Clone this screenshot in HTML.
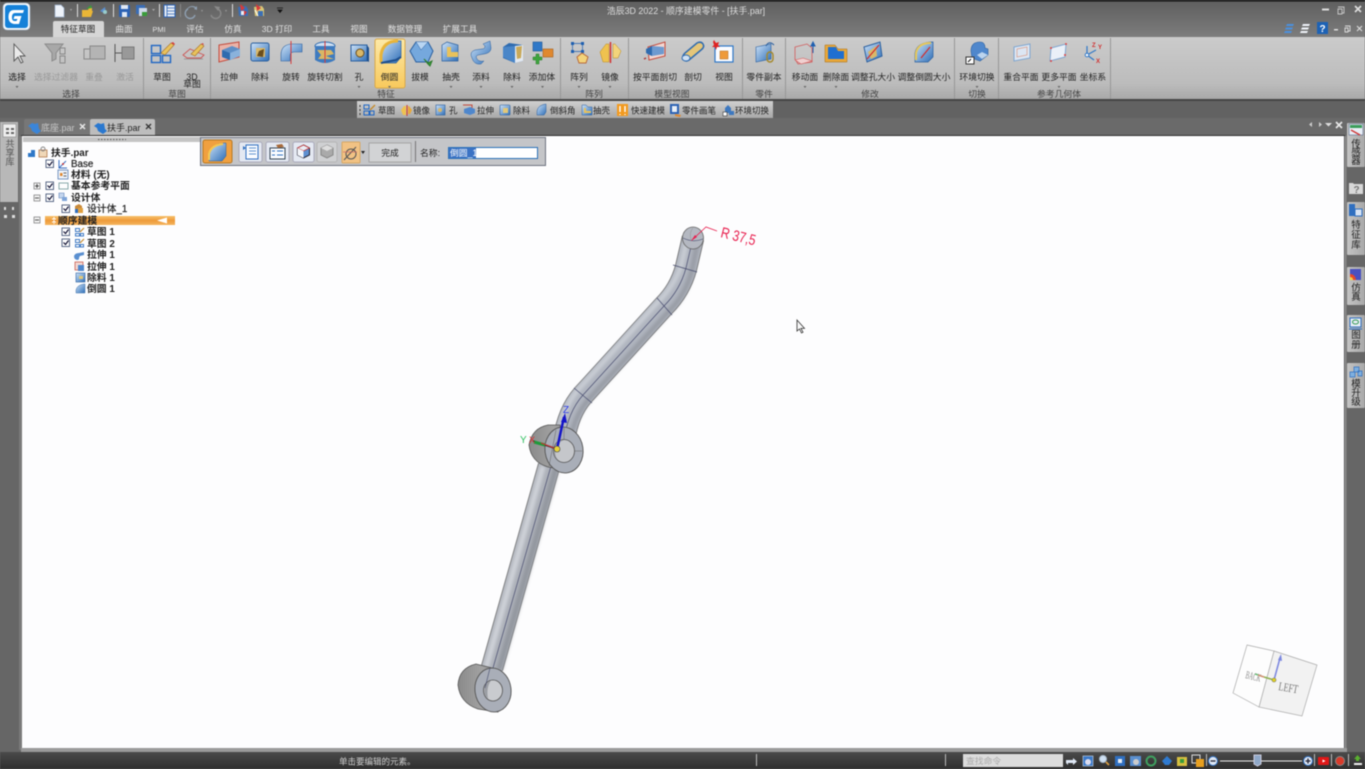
<!DOCTYPE html>
<html lang="zh"><head><meta charset="utf-8"><title>浩辰3D 2022</title>
<style>
html,body{margin:0;padding:0;width:1365px;height:769px;overflow:hidden;background:#666}
svg{display:block;filter:blur(.4px)}
text{font-family:"Liberation Sans","Noto Sans CJK SC",sans-serif;font-size:8.8px;fill:#222}
.c{text-anchor:middle}.g{fill:#999}.gr{fill:#444}.tree{font-size:9.8px;font-weight:bold;fill:#222}
.q{font-size:8.5px;fill:#222}.tab{fill:#e2e2e2;font-size:8.6px}
</style></head><body>
<svg width="1365" height="769" viewBox="0 0 1365 769" xmlns="http://www.w3.org/2000/svg">
<defs>
<linearGradient id="tb" x1="0" y1="0" x2="0" y2="1"><stop offset="0" stop-color="#5e5e5e"/><stop offset="1" stop-color="#7d7d7d"/></linearGradient>
<linearGradient id="rb" x1="0" y1="0" x2="0" y2="1"><stop offset="0" stop-color="#cbcbcb"/><stop offset=".75" stop-color="#bcbcbc"/><stop offset="1" stop-color="#a9a9a9"/></linearGradient>
<linearGradient id="qb" x1="0" y1="0" x2="0" y2="1"><stop offset="0" stop-color="#d0d0d0"/><stop offset="1" stop-color="#a8a8a8"/></linearGradient>
<linearGradient id="hl" x1="0" y1="0" x2="0" y2="1"><stop offset="0" stop-color="#fde9a8"/><stop offset="1" stop-color="#f8c95c"/></linearGradient>
<linearGradient id="or" x1="0" y1="0" x2="0" y2="1"><stop offset="0" stop-color="#f7c06a"/><stop offset=".5" stop-color="#ee9a3a"/><stop offset="1" stop-color="#f5b45e"/></linearGradient>
<linearGradient id="blu" x1="0" y1="0" x2="1" y2="1"><stop offset="0" stop-color="#cfe3f7"/><stop offset="1" stop-color="#2f6fb8"/></linearGradient>
<linearGradient id="side" x1="0" y1="0" x2="1" y2="0"><stop offset="0" stop-color="#c4c4c4"/><stop offset="1" stop-color="#a8a8a8"/></linearGradient>
<linearGradient id="st" x1="0" y1="0" x2="0" y2="1"><stop offset="0" stop-color="#4a4a4a"/><stop offset="1" stop-color="#2f2f2f"/></linearGradient>
<linearGradient id="hub" x1="0" y1="0" x2="1" y2="0"><stop offset="0" stop-color="#8a8a8a"/><stop offset=".6" stop-color="#a2a2a2"/><stop offset="1" stop-color="#8f8f8f"/></linearGradient>
<filter id="sb" filterUnits="userSpaceOnUse" x="440" y="200" width="300" height="520"><feGaussianBlur stdDeviation="1.8"/></filter>
</defs>

<!-- frame -->
<rect width="1365" height="769" fill="#666"/>
<rect width="1365" height="37" fill="url(#tb)"/>
<rect width="1365" height="1.5" fill="#111"/>
<rect y="37" width="1365" height="62" fill="url(#rb)"/>
<rect y="99" width="1365" height="2" fill="#454545"/>
<rect y="101" width="1365" height="17" fill="#626262"/>
<rect y="118" width="1365" height="18" fill="#6a6a6a"/>
<rect x="357" y="101" width="416" height="17" fill="url(#qb)"/>

<!-- logo -->
<rect x="3" y="3" width="27" height="27" rx="4" fill="#f4f8fc" stroke="#9ab" stroke-width=".6"/>
<rect x="5" y="5" width="23" height="23" rx="3" fill="#1581d8"/>
<path d="M24 10 H14 Q9 10 8.500 16 Q8 23 14 24 H19 L21.500 16 H14.500 L13.500 19 H17.500 L16.500 21 H14 Q11.500 20.500 12 16 Q12.500 13 15 13 H23 Z" fill="#fff"/>

<!-- qat -->
<path d="M55 5h6l3 3v9h-9z" fill="#eef3fa" stroke="#9fb4d0" stroke-width=".7"/>
<path d="M70 9l2 0-1 2z" fill="#aaa"/>
<rect x="77" y="4" width="1" height="13" fill="#ddd"/>
<path d="M82 10h6l1-2h3v3h1l-2 6h-9z" fill="#e9b637"/><path d="M86 9l5-4 1 3z" fill="#3a9c3a"/>
<path d="M100 11l5-4 1 7z" fill="#5b8fd0"/><circle cx="105" cy="12" r="2" fill="#9cc"/>
<rect x="113" y="4" width="1" height="13" fill="#ddd"/>
<rect x="119" y="5" width="11" height="12" rx="1" fill="#2c62b4"/><rect x="121" y="5" width="7" height="4" fill="#dfe8f5"/><rect x="122" y="12" width="5" height="5" fill="#dfe8f5"/>
<rect x="136" y="5" width="9" height="9" fill="#3a6db5"/><rect x="139" y="8" width="8" height="8" fill="#cfd9e8"/><rect x="142" y="12" width="5" height="4" fill="#3a9c3a"/>
<path d="M152 9l3 0-1.500 2z" fill="#aaa"/>
<rect x="159" y="4" width="1" height="13" fill="#ddd"/>
<rect x="164" y="5" width="11" height="12" fill="#e8eef6" stroke="#2c62b4"/><path d="M167 5v12M167 8h8M167 11h8M167 14h8" stroke="#2c62b4" stroke-width=".8"/>
<rect x="180" y="4" width="1" height="13" fill="#888"/>
<path d="M186 11q4-6 9-3l-1 1 3 1v-4l-1 1q-6-3-10 3" fill="#8fa0b2"/><path d="M188 9a5 5 0 1 0 7 6" fill="none" stroke="#8fa0b2" stroke-width="1.400"/>
<path d="M201 10l2 0-1 2z" fill="#999"/>
<path d="M218 9a5 5 0 1 1-7 6" fill="none" stroke="#8a8a8a" stroke-width="1.400"/><path d="M214 6l6 1-2 4z" fill="#8a8a8a"/>
<path d="M225 10l2 0-1 2z" fill="#999"/>
<rect x="232" y="4" width="1" height="13" fill="#ddd"/>
<path d="M238 7l8-1 2 3 0 7-9 0z" fill="#3b6fb5"/><path d="M240 4l5 4-4 3zM243 10l4 2-3 4z" fill="#d83a3a"/><path d="M241 11h3v4h-3z" fill="#e8eef6"/>
<path d="M254 7l8-1 2 3 0 7-9 0z" fill="#d8c676"/><path d="M256 4l5 4-4 3z" fill="#d83a3a"/><path d="M258 11l5 0 0 5-5 0z" fill="#3b6fb5"/><path d="M255 10l3 6" stroke="#fff"/>
<path d="M277 8h6M278 10h4l-2 2.500z" fill="#111" stroke="#111" stroke-width=".8"/>

<!-- title -->
<text x="686" y="14" class="c" style="font-size:8.9px;fill:#ddd">浩辰3D 2022 - 顺序建模零件 - [扶手.par]</text>

<!-- window controls -->
<rect x="1322" y="8.500" width="7" height="2" fill="#ddd"/>
<path d="M1338 7h6v6h-2M1338 9h4v5h-4z" fill="none" stroke="#c8c8c8" stroke-width=".9"/>
<path d="M1355 6l6 6M1361 6l-6 6" stroke="#ddd" stroke-width="1.700"/>
<path d="M1287 24h7l-1 2h-7zM1286 27.500h7l-1 2h-7zM1285 31h7l-1 2h-7z" fill="#4a90df"/>
<path d="M1303 24h7l-1 2h-7zM1302 27.500h7l-1 2h-7zM1301 31h7l-1 2h-7z" fill="#f0f4fa"/>
<rect x="1317" y="22" width="11" height="12" fill="#1d62b5"/><text x="1322.500" y="32" class="c" style="font-size:10px;font-weight:bold;fill:#fff">?</text>
<rect x="1334" y="29" width="4" height="1.500" fill="#ddd"/>
<path d="M1345 26h5v5h-2M1345 28h3v4h-3z" fill="none" stroke="#ddd" stroke-width=".9"/>
<path d="M1357 26l5 5M1362 26l-5 5" stroke="#ddd" stroke-width="1.100"/>

<!-- ribbon tabs -->
<path d="M53 37V23q0-2 2-2h47q2 0 2 2v14z" fill="#d6d6d6"/>
<text x="78" y="32" class="c" style="fill:#222;font-size:8.6px">特征草图</text>
<text x="124" y="32" class="c tab">曲面</text><text x="159" y="32" class="c tab" style="font-size:7.5px">PMI</text><text x="195" y="32" class="c tab">评估</text><text x="233" y="32" class="c tab">仿真</text><text x="277" y="32" class="c tab">3D 打印</text><text x="321" y="32" class="c tab">工具</text><text x="359" y="32" class="c tab">视图</text><text x="405" y="32" class="c tab">数据管理</text><text x="460" y="32" class="c tab">扩展工具</text>

<!-- separators -->
<path d="M143.500 38v61M210.500 38v61M560.500 38v61M628.500 38v61M742.500 38v61M785.500 38v61M954.500 38v61M998.500 38v61M1110.500 38v61" stroke="#979797"/>

<!-- highlight -->
<rect x="375" y="39" width="30" height="49" rx="2" fill="url(#hl)" stroke="#d9a94a"/>

<!-- ribbon icons -->
<path d="M14 44l0 17 4-4 3 6 2-1-3-6 5 0z" fill="#eaeaea" stroke="#555" stroke-width=".9"/>
<path d="M45 44h18l-7 9v6l-4 2v-8z" fill="#a8a8a8" stroke="#8a8a8a"/><rect x="60" y="48" width="5" height="6" fill="none" stroke="#888"/><rect x="60" y="56" width="5" height="7" fill="none" stroke="#888"/>
<rect x="84" y="49" width="9" height="10" fill="none" stroke="#888"/><rect x="90" y="46" width="15" height="13" fill="#b4b4b4" stroke="#888"/>
<path d="M115 44v18M115 53h7" stroke="#555" stroke-width="1"/><rect x="122" y="47" width="12" height="12" fill="#999" stroke="#777"/>
<rect x="151.500" y="45.500" width="9" height="8" fill="none" stroke="#1f66c4" stroke-width="1.400"/><rect x="151.500" y="55.500" width="9" height="7" fill="none" stroke="#1f66c4" stroke-width="1.400"/><rect x="162.500" y="55.500" width="8" height="7" fill="none" stroke="#1f66c4" stroke-width="1.400"/><path d="M161 53l10-10 3 2-9 10z" fill="#e9c25b" stroke="#a5702a" stroke-width=".6"/><path d="M171 43l2-1 2 2-1 1z" fill="#d64040"/>
<path d="M183 55l7-6 14 6-3 3-14 0z" fill="none" stroke="#c55" stroke-width=".9"/><path d="M191 54l10-10 3 2-9 10z" fill="#e9c25b" stroke="#a5702a" stroke-width=".6"/><path d="M201 44l2-1 1 2z" fill="#d64040"/><path d="M184 59h19" stroke="#999"/>
<!-- extrude -->
<path d="M219 45l20-3v15l-20 5z" fill="#e9b3a8" stroke="#c24a3c"/><path d="M222 50l10-4 8 3v7l-10 4-8-3z" fill="#5e8fc6"/><path d="M222 50l8 3v7l-8-3z" fill="#2f6baf"/><path d="M230 53l10-4v7l-10 4z" fill="#8ab2dc"/>
<!-- cutout -->
<rect x="251" y="43" width="18" height="18" rx="2" fill="url(#blu)" stroke="#2a5f9f"/><path d="M256 48h9v9l-9 0z" fill="#d9b869"/><path d="M257 56l2-5 5-2-1 8z" fill="#6b4e1d"/>
<!-- revolve -->
<path d="M281 61v-6q0-11 12-11l9 0v8h-8q-4 0-4 4v5z" fill="url(#blu)" stroke="#2a5f9f" stroke-width=".6"/><path d="M291 41v23" stroke="#d63b3b"/>
<!-- rev cut -->
<ellipse cx="325" cy="46" rx="10" ry="4" fill="#cfe0f3" stroke="#2f6baf"/><path d="M315 46v14q10 6 20 0v-14" fill="#3e7bc0"/><path d="M317 50l14 0 3 4-8 2 8 3-16 0 3-4z" fill="#d8b766"/><path d="M325 41v22" stroke="#d63b3b"/>
<!-- hole -->
<rect x="351" y="45" width="16" height="16" fill="url(#blu)" stroke="#2a5f9f"/><path d="M367 45l2 3v14l-2-1z" fill="#1e4f8e"/><circle cx="360" cy="53" r="4" fill="#d9b869" stroke="#6b4e1d"/>
<!-- round -->
<path d="M381 63V55q2-14 18-14h2v16l-5 6z" fill="url(#blu)" stroke="#2a5f9f" stroke-width=".7"/><path d="M381 63v-8q2-14 17-14" fill="none" stroke="#e8b43a" stroke-width="3"/><path d="M381 63l15-3 5-3" fill="none" stroke="#1e4f8e" stroke-width="2"/>
<!-- draft -->
<path d="M410 51l6-9h12l5 9-5 11h-12z" fill="#75a8dd" stroke="#2a5f9f"/><path d="M416 42l5 8 7-8" fill="#b8d5f2" stroke="#2a5f9f" stroke-width=".5"/><path d="M424 59l4 4 4-2-2 5-2-2z" fill="#3a9c3a" stroke="#2b7a2b"/>
<!-- shell -->
<path d="M442 45l5-3 11 3v16h-16z" fill="url(#blu)" stroke="#2a5f9f" stroke-width=".7"/><path d="M447 47h4v5h7v5h-11z" fill="#e9c25b"/>
<!-- add -->
<path d="M472 58q-3-6 3-8l7-1q3 0 3-3l-2-2 7-3 1 7q0 5-7 6l-6 1q-3 1-1 4 2 3 7 2l-3 3q-7 1-9-6z" fill="url(#blu)" stroke="#2a5f9f" stroke-width=".5"/>
<!-- remove -->
<path d="M503 47l6-4 14 2v16l-8 2-12-5z" fill="#2f6baf"/><path d="M515 46l8-1v16l-8 2z" fill="#e3e9f1"/><path d="M516 47l6-1-1 12-4 1z" fill="#c9a959"/><path d="M503 47l12-1v17l-12-6z" fill="#4a86c8"/>
<!-- add body -->
<rect x="533" y="42" width="9" height="9" fill="#2f78c8" stroke="#1e5595" stroke-width=".6"/><rect x="543" y="49" width="10" height="8" fill="#e0882f" stroke="#a65f1c" stroke-width=".6"/><path d="M536 54h3v3h3v3h-3v4h-3v-4h-3v-3h3z" fill="#3da53d" stroke="#2b7a2b" stroke-width=".5"/>
<!-- pattern -->
<rect x="571" y="42" width="3" height="3" fill="#1e5fb0"/><rect x="581" y="42" width="3" height="3" fill="#1e5fb0"/><rect x="571" y="50" width="3" height="3" fill="#1e5fb0"/><rect x="581" y="50" width="3" height="3" fill="#1e5fb0"/><path d="M572.500 43.500h10v8h-10z" fill="none" stroke="#1e5fb0" stroke-width=".7"/>
<path d="M582 53l6 4-2 6h-7l-2-6z" fill="#f3d47b" stroke="#b96a3a"/>
<!-- mirror -->
<path d="M600 52l6-8 3 0v18h-6z" fill="#efc24f" stroke="#b98a24" stroke-width=".5"/><path d="M613 44h2l6 7-3 7h-5z" fill="#f3d47b" stroke="#b98a24" stroke-width=".5"/><path d="M610.500 42v21" stroke="#d42b2b" stroke-width="1.400"/>
<!-- plane cut -->
<path d="M648 47l17-5v14l-16 4z" fill="#f2d7d2" stroke="#c24a3c"/><path d="M647 49l5-3 12 1v7l-12 2-5-2z" fill="#6d9ad0"/><path d="M646 49l6-3v10l-6-3z" fill="#2f6baf"/><path d="M646 58l-2 1" stroke="#a33" stroke-width="1.500"/>
<!-- section -->
<path d="M684 60q-3-3 1-7l12-10q4-2 6 1 2 3-2 6l-12 10q-3 2-5 0z" fill="#e5c679" stroke="#2f6baf" stroke-width="1.500"/><ellipse cx="686" cy="58" rx="4" ry="3" fill="#cfe0f3" stroke="#2f6baf"/>
<!-- view -->
<rect x="715" y="46" width="18" height="16" fill="#fbfcff" stroke="#2f78c8" stroke-width="1.200"/><rect x="720" y="51" width="8" height="8" fill="#ee9a3a" stroke="#b46a1d" stroke-width=".5"/><path d="M714 40l2 3 3-1-1 3 2 2-3 0-1 3-1-3-3 0 2-2-1-3z" fill="#e02222"/>
<!-- copy -->
<path d="M756 47l15-3v15l-15 3z" fill="url(#blu)" stroke="#2a5f9f" stroke-width=".6"/><path d="M766 46q3-6 8-1" fill="none" stroke="#2a5f9f"/><rect x="767" y="52" width="6" height="10" rx="3" fill="none" stroke="#a5882a" stroke-width="1.400"/>
<!-- move face -->
<path d="M795 47l12-3 5 4v14l-14 2-3-5z" fill="none" stroke="#d25a5a" stroke-width=".8"/><path d="M795 60l8-2 9 3-11 3z" fill="#f0d0d0" stroke="#d25a5a" stroke-width=".6"/><path d="M813 53v-10M811 46l2-4 2 4z" stroke="#1f5fb0" fill="#1f5fb0" stroke-width="1"/>
<!-- delete face -->
<path d="M825 45h10l3 4h9v13h-22z" fill="#e9a838" stroke="#a66b14" stroke-width=".5"/><path d="M828 47h8l2 4h6v8h-16z" fill="#1f6fd0"/>
<!-- resize hole -->
<path d="M864 47l16-5 2 14-15 6z" fill="url(#blu)" stroke="#2a5f9f"/><path d="M868 52l8-6 1 10-6 3z" fill="#d9b869"/><path d="M867 59l12-14" stroke="#d42b2b" stroke-width="1.200"/>
<!-- resize round -->
<path d="M915 62V53q2-11 18-11v15l-5 5z" fill="url(#blu)" stroke="#2a5f9f" stroke-width=".7"/><path d="M916 60v-7q2-10 15-10" fill="none" stroke="#e8c85a" stroke-width="2"/><path d="M921 58l9-11" stroke="#d42b2b" stroke-width="1.200"/>
<!-- env switch -->
<path d="M971 51q0-9 9-9 5 0 5 6l3 1 0 6-8 6-8-3z" fill="#4f87cc" stroke="#2a5f9f" stroke-width=".6"/><path d="M977 55l5-3 6 3-6 4z" fill="#bcd4ee"/><rect x="966" y="57" width="8" height="7" fill="#fff" stroke="#333"/><path d="M968 62l3-3" stroke="#111"/>
<!-- planes -->
<path d="M1014 47l16-3v14l-16 3z" fill="#dce6f3" stroke="#7fa5cf"/><path d="M1017 49l10-2v8l-10 2z" fill="none" stroke="#d99a85" stroke-width=".7"/>
<path d="M1051 48l15-4-1 13-15 4z" fill="#eaf0f8" stroke="#7fa5cf"/><circle cx="1051" cy="48" r="1" fill="#d44"/><circle cx="1066" cy="44" r="1" fill="#d44"/><circle cx="1065" cy="55" r="1" fill="#d44"/><circle cx="1051" cy="61" r="1" fill="#d44"/>
<path d="M1087 55v-9M1087 55l9-5M1087 55l7 5" stroke="#2f78c8" stroke-width="1.200" fill="none"/><circle cx="1087" cy="55" r="1.800" fill="#fff" stroke="#2f78c8"/>
<text x="1092" y="47" style="font-size:6px;fill:#d03030;font-weight:bold">Z</text><text x="1098" y="49" style="font-size:6px;fill:#d03030;font-weight:bold">Y</text><text x="1096" y="63" style="font-size:6px;fill:#d03030;font-weight:bold">X</text>

<!-- ribbon labels -->
<text x="17" y="80" class="c">选择</text><text x="56" y="80" class="c g">选择过滤器</text><text x="94" y="80" class="c g">重叠</text><text x="125" y="80" class="c g">激活</text>
<text x="162" y="80" class="c">草图</text><text x="192" y="80" class="c">3D</text><text x="192" y="87" class="c">草图</text>
<text x="229" y="80" class="c">拉伸</text><text x="260" y="80" class="c">除料</text><text x="291" y="80" class="c">旋转</text><text x="325" y="80" class="c">旋转切割</text><text x="359" y="80" class="c">孔</text><text x="389.500" y="80" class="c">倒圆</text><text x="420" y="80" class="c">拔模</text><text x="451" y="80" class="c">抽壳</text><text x="481" y="80" class="c">添料</text><text x="512" y="80" class="c">除料</text><text x="542" y="80" class="c">添加体</text>
<text x="579" y="80" class="c">阵列</text><text x="610" y="80" class="c">镜像</text><text x="655" y="80" class="c">按平面剖切</text><text x="693" y="80" class="c">剖切</text><text x="724" y="80" class="c">视图</text><text x="764" y="80" class="c">零件副本</text>
<text x="805" y="80" class="c">移动面</text><text x="836" y="80" class="c">删除面</text><text x="873" y="80" class="c">调整孔大小</text><text x="924" y="80" class="c">调整倒圆大小</text><text x="977" y="80" class="c">环境切换</text><text x="1021" y="80" class="c">重合平面</text><text x="1059" y="80" class="c">更多平面</text><text x="1093" y="80" class="c">坐标系</text>
<text x="71" y="97" class="c gr">选择</text><text x="177" y="97" class="c gr">草图</text><text x="386" y="97" class="c gr">特征</text><text x="594" y="97" class="c gr">阵列</text><text x="672" y="97" class="c gr">模型视图</text><text x="764" y="97" class="c gr">零件</text><text x="870" y="97" class="c gr">修改</text><text x="977" y="97" class="c gr">切换</text><text x="1059" y="97" class="c gr">参考几何体</text>
<path d="M15.500 86l3 0-1.500 2zM357.500 86l3 0-1.500 2zM388 86l3 0-1.500 2zM449.500 86l3 0-1.500 2zM479.500 86l3 0-1.500 2zM510.500 86l3 0-1.500 2zM541 86l3 0-1.500 2zM577.500 86l3 0-1.500 2zM608.500 86l3 0-1.500 2zM803.500 86l3 0-1.500 2zM834.500 86l3 0-1.500 2zM975.500 86l3 0-1.500 2zM1057.500 86l3 0-1.500 2z" fill="#666"/>

<!-- quick toolbar -->
<path d="M360 105v2M360 109v2M360 113v2" stroke="#333"/>
<rect x="364" y="105" width="5" height="4" fill="none" stroke="#1f66c4"/><rect x="364" y="111" width="5" height="4" fill="none" stroke="#1f66c4"/><rect x="370" y="111" width="4" height="4" fill="none" stroke="#1f66c4"/><path d="M370 110l5-5" stroke="#c58a2a" stroke-width="1.300"/>
<path d="M401 110l3-4h2v9h-3z" fill="#efc24f"/><path d="M408 106h1l3 4-2 4h-2z" fill="#e9a838"/><path d="M407 105v11" stroke="#c33"/>
<rect x="436" y="105" width="9" height="10" fill="url(#blu)" stroke="#2a5f9f" stroke-width=".6"/><circle cx="440" cy="110" r="2" fill="#d9b869"/>
<path d="M463 105h9v8" fill="none" stroke="#c24a3c"/><path d="M464 109l6-2 5 2v4l-5 2-6-2z" fill="#4f87cc"/>
<rect x="500" y="105" width="10" height="10" rx="1" fill="url(#blu)" stroke="#2a5f9f" stroke-width=".6"/><path d="M503 108h5v5h-5z" fill="#e3c878"/>
<path d="M537 115v-4q1-6 9-7v8l-2 3z" fill="url(#blu)" stroke="#2a5f9f" stroke-width=".5"/>
<path d="M582 105h4l2 2h4v8h-10z" fill="url(#blu)" stroke="#2a5f9f" stroke-width=".5"/><path d="M584 108h2v3h5v2h-7z" fill="#e9c25b"/>
<rect x="617" y="104" width="11" height="12" fill="#f29a1f"/><path d="M620 106v6M625 106v6M620 114v1M625 114v1" stroke="#fff" stroke-width="1.400"/>
<rect x="670" y="104" width="9" height="10" fill="#2c62b4"/><rect x="672" y="106" width="5" height="6" fill="#e8eef6"/><path d="M675 114l6 1-1 2-5-1z" fill="#e0882f"/>
<path d="M725 108l3-3 3 3v3l3 0v4h-5v-2h-4z" fill="#3d78bf"/><rect x="723" y="112" width="4" height="4" fill="#fff" stroke="#333" stroke-width=".6"/>
<text x="378" y="113.500" class="q">草图</text><text x="413" y="113.500" class="q">镜像</text><text x="449" y="113.500" class="q">孔</text><text x="477" y="113.500" class="q">拉伸</text><text x="513" y="113.500" class="q">除料</text><text x="550" y="113.500" class="q">倒斜角</text><text x="593" y="113.500" class="q">抽壳</text><text x="631" y="113.500" class="q">快速建模</text><text x="682" y="113.500" class="q">零件画笔</text><text x="735" y="113.500" class="q">环境切换</text>

<!-- doc tabs -->
<path d="M24 136v-15q0-2 2-2h64v17z" fill="#777"/>
<path d="M90 136v-15q0-2 2-2h61q2 0 2 2v15z" fill="#bdbdbd"/>
<path d="M28 126l4-3 3 1 3-1 1 6 2 2-4 3-5-3-1-3z" fill="#3b85d8"/>
<path d="M94 126l4-3 3 1 3-1 1 6 2 2-4 3-5-3-1-3z" fill="#2a78cf"/>
<text x="41" y="131" style="font-size:9px;fill:#c8c8c8">底座.par</text>
<text x="107" y="131" style="font-size:9px;fill:#222">扶手.par</text>
<path d="M80 124l5 5M85 124l-5 5" stroke="#e8e8e8" stroke-width="1.500"/><path d="M146 124l5 5M151 124l-5 5" stroke="#333" stroke-width="1.300"/>
<path d="M1312 122v5l-3-2.500zM1319 122v5l3-2.500z" fill="#ccc"/><path d="M1325 123h7l-3.500 3.500z" fill="#ddd"/><path d="M1336 122l6 6M1342 122l-6 6" stroke="#e8e8e8" stroke-width="1.700"/>

<!-- viewport -->
<rect x="21" y="135" width="1324" height="615" fill="#333"/>
<rect x="22" y="136" width="1322" height="612" fill="#fdfdfe"/>
<rect x="1344.500" y="136" width="2" height="614" fill="#8a8a8a"/>
<rect x="19" y="136" width="3" height="614" fill="#7a7a7a"/>
<rect x="21" y="748" width="1326" height="4" fill="#9a9a9a"/>

<!-- left strip -->
<path d="M0 122h18v80H0z" fill="#b8b8b8"/>
<rect x="3" y="124" width="13" height="13" fill="#efefef" stroke="#888" stroke-width=".6"/>
<path d="M6 128h3v2H6zM11 128h3v2h-3zM6 132h3v2H6zM11 132h3v2h-3z" fill="#666"/>
<text x="10" y="147" class="c" style="font-size:9px;fill:#555">共</text><text x="10" y="156" class="c" style="font-size:9px;fill:#555">享</text><text x="10" y="165" class="c" style="font-size:9px;fill:#555">库</text>
<rect x="4" y="207" width="2" height="3" fill="#ddd"/><rect x="12" y="207" width="2" height="3" fill="#ddd"/><rect x="4" y="215" width="3" height="3" fill="#ddd"/><rect x="12" y="215" width="3" height="3" fill="#ddd"/>

<!-- right side tabs -->
<rect x="1347" y="123" width="18" height="44" rx="1" fill="url(#side)"/>
<rect x="1349" y="124" width="14" height="11" fill="#e8eef6" stroke="#5a6a8a" stroke-width=".6"/><path d="M1350 125h12v3h-12z" fill="#3a9c5a"/><path d="M1351 130l9 5" stroke="#d03a3a" stroke-width="1.500"/>
<text x="1356" y="147" class="c" style="font-size:9.500px;fill:#222">传</text><text x="1356" y="155.500" class="c" style="font-size:9.500px;fill:#222">感</text><text x="1356" y="164" class="c" style="font-size:9.500px;fill:#222">器</text>
<path d="M1349 183h4l1 1h9v10h-14z" fill="#d8d8d8"/><text x="1356.500" y="193" class="c" style="font-size:10px;font-weight:bold;fill:#777">?</text>
<rect x="1347" y="202" width="18" height="53" rx="1" fill="url(#side)"/>
<rect x="1349" y="204" width="6" height="12" fill="#2f6fc0"/><rect x="1355" y="209" width="7" height="7" fill="#d8e4f4" stroke="#2f6fc0"/>
<text x="1356" y="228" class="c" style="font-size:9.500px;fill:#222">特</text><text x="1356" y="238" class="c" style="font-size:9.500px;fill:#222">征</text><text x="1356" y="248" class="c" style="font-size:9.500px;fill:#222">库</text>
<rect x="1347" y="267" width="18" height="38" rx="1" fill="url(#side)"/>
<rect x="1350" y="269" width="11" height="11" fill="#4a50c0"/><path d="M1350 280v-6q5 0 6 6z" fill="#e8482a"/><path d="M1350 280v-3q3 0 3 3z" fill="#f5d040"/>
<text x="1356" y="291" class="c" style="font-size:9.500px;fill:#222">仿</text><text x="1356" y="300" class="c" style="font-size:9.500px;fill:#222">真</text>
<rect x="1347" y="315" width="18" height="37" rx="1" fill="url(#side)"/>
<rect x="1350" y="318" width="11" height="9" fill="#e8eef6" stroke="#2f6fc0"/><ellipse cx="1355.500" cy="322" rx="3" ry="2" fill="none" stroke="#3a9c5a"/><path d="M1349 329h13" stroke="#2f6fc0"/>
<text x="1356" y="338" class="c" style="font-size:9.500px;fill:#222">图</text><text x="1356" y="348" class="c" style="font-size:9.500px;fill:#222">册</text>
<rect x="1347" y="363" width="18" height="45" rx="1" fill="url(#side)"/>
<path d="M1350 372h5v5h-5zM1354 367h5v5h-5zM1358 371h4v5h-4z" fill="#7fb0e0" stroke="#2f6fc0" stroke-width=".7"/>
<text x="1356" y="387" class="c" style="font-size:9.500px;fill:#222">模</text><text x="1356" y="396" class="c" style="font-size:9.500px;fill:#222">升</text><text x="1356" y="405" class="c" style="font-size:9.500px;fill:#222">级</text>

<!-- tree top -->
<rect x="23" y="137" width="177" height="5" fill="#c4c4c4"/>
<path d="M98 139.500h28" stroke="#555" stroke-dasharray="1.500 1.500"/>

<!-- tree -->
<rect x="28" y="150" width="7" height="7" fill="#2f78c8"/><rect x="28" y="150" width="3" height="3" fill="#fff"/>
<rect x="39" y="150" width="8" height="7" fill="#f0d8b8" stroke="#a86a3a" stroke-width=".7"/><circle cx="43" cy="149" r="2" fill="none" stroke="#888"/>
<text x="51" y="156" class="tree">扶手.par</text>
<g fill="#fff" stroke="#4a5a7a" stroke-width=".9">
<rect x="46" y="160" width="7.500" height="7.500"/><rect x="46" y="182" width="7.500" height="7.500"/><rect x="46" y="194" width="7.500" height="7.500"/><rect x="62" y="205" width="7.500" height="7.500"/><rect x="62" y="228" width="7.500" height="7.500"/><rect x="62" y="239" width="7.500" height="7.500"/>
</g>
<path d="M47.500 163.500l2 2 3-4M47.500 185.500l2 2 3-4M47.500 197.500l2 2 3-4M63.500 208.500l2 2 3-4M63.500 231.500l2 2 3-4M63.500 242.500l2 2 3-4" fill="none" stroke="#113" stroke-width="1.200"/>
<g fill="#f2f2f2" stroke="#777" stroke-width=".7">
<rect x="34" y="183" width="6" height="6"/><rect x="34" y="195" width="6" height="6"/><rect x="34" y="217" width="6" height="6"/>
</g>
<path d="M35 186h4M37 184v4M35 198h4M35 220h4" stroke="#222" stroke-width=".8"/>
<path d="M59 160v8h8M59 168l7-7" fill="none" stroke="#3a6fc0"/><circle cx="63" cy="164" r="1" fill="#c33"/>
<text x="71" y="167" class="tree" style="font-weight:normal;stroke:#222;stroke-width:.2">Base</text>
<rect x="58" y="170" width="10" height="9" fill="#eef3fa" stroke="#5a7fb5" stroke-width=".8"/><rect x="60" y="173" width="2.500" height="3" fill="#e0882f"/><path d="M63.500 173h3M63.500 176h3" stroke="#333" stroke-width=".7"/>
<text x="71" y="178" class="tree">材料 (无)</text>
<rect x="59" y="183" width="9" height="6" fill="none" stroke="#8aa"/><text x="71" y="189" class="tree">基本参考平面</text>
<path d="M59 193h5v5h-5z" fill="#c4d6ee" stroke="#5a7fb5" stroke-width=".6"/><path d="M62 197h5v4h-5z" fill="#7fa5d8"/><text x="71" y="201" class="tree">设计体</text>
<path d="M75 206l4-2 3 2v7h-7z" fill="#c98a3a"/><path d="M78 208h5v5h-5z" fill="#e0a040"/><path d="M75 209h3v4h-3z" fill="#2f6fc0"/><text x="87" y="212" class="tree" style="font-weight:normal;stroke:#222;stroke-width:.2">设计体_1</text>
<rect x="45" y="216" width="130" height="9" fill="url(#or)"/><path d="M54 217v7" stroke="#fff" stroke-dasharray="2 1"/><path d="M52 219h4M52 222h4" stroke="#fff"/>
<path d="M157 220.500l10-3v6z" fill="#fff"/>
<text x="58" y="224" class="tree">顺序建模</text>
<g fill="none" stroke="#2f6fc0" stroke-width=".9"><rect x="75.500" y="228.500" width="4" height="3"/><rect x="75.500" y="233.500" width="4" height="2.500"/><rect x="80.500" y="233.500" width="3" height="2.500"/><rect x="75.500" y="239.500" width="4" height="3"/><rect x="75.500" y="244.500" width="4" height="2.500"/><rect x="80.500" y="244.500" width="3" height="2.500"/></g>
<path d="M80 232l4-4M80 243l4-4" stroke="#c58a2a" stroke-width="1.200"/>
<text x="87" y="235" class="tree">草图 1</text><text x="87" y="247" class="tree">草图 2</text>
<path d="M74 256q1-3 5-3l5-1v3l-4 1q-1 1-1 3l-1 1q-4 0-4-4z" fill="#5a8fd0"/>
<rect x="75" y="262" width="8" height="8" fill="#f2d7d2" stroke="#c24a3c" stroke-width=".7"/><rect x="78" y="265" width="6" height="6" fill="#4f87cc"/>
<rect x="76" y="273" width="9" height="9" fill="url(#blu)" stroke="#2a5f9f" stroke-width=".6"/><rect x="79" y="276" width="4" height="3" fill="#e3c878"/>
<path d="M76 293v-3q1-5 8-6l1 0v9z" fill="url(#blu)" stroke="#2a5f9f" stroke-width=".4"/>
<text x="87" y="258" class="tree">拉伸 1</text><text x="87" y="270" class="tree">拉伸 1</text><text x="87" y="281" class="tree">除料 1</text><text x="87" y="292" class="tree">倒圆 1</text>

<!-- command bar -->
<rect x="200.500" y="137.500" width="345" height="28" fill="#c4c5c8" stroke="#6e7480"/>
<rect x="203" y="140" width="29" height="23" rx="2" fill="#f0a040" stroke="#b97820"/>
<path d="M209 161v-7q2-10 15-11h2v13l-4 5z" fill="url(#blu)" stroke="#2a5f9f" stroke-width=".5"/><path d="M209 160v-6q2-9 14-10" fill="none" stroke="#f5c850" stroke-width="2"/>
<rect x="239" y="142" width="23" height="20" rx="2" fill="#e4e9f2" stroke="#aab"/><rect x="246" y="145" width="12" height="14" fill="#fafcff" stroke="#2f6fc0"/><path d="M249 148h7M249 151h7M249 154h7" stroke="#2f6fc0" stroke-width=".8"/><path d="M243 146l3 2-3 2z" fill="#2f6fc0"/>
<rect x="266" y="142" width="23" height="20" rx="2" fill="#e4e9f2" stroke="#aab"/><rect x="270" y="148" width="15" height="11" fill="#fafcff" stroke="#345"/><path d="M272 151h3M272 155h3M277 151h6M277 155h6" stroke="#2f6fc0"/><path d="M276 145l6-1 2 3-6 1z" fill="#a86a3a"/>
<rect x="293" y="142" width="21" height="20" rx="2" fill="#e4e9f2" stroke="#aab"/><path d="M303.500 145l6 3v7l-6 3-6-3v-7z" fill="#5e8fd0" stroke="#223"/><path d="M297.500 148l6 3 6-3-6-3z" fill="#e8eef6" stroke="#c33" stroke-width=".7"/><path d="M297.500 148l6 3v7l-6-3z" fill="#f4f6fa"/>
<rect x="317" y="142" width="20" height="20" rx="2" fill="#cfd0d2" stroke="#b5b5b5"/><path d="M327 145l6 3v7l-6 3-6-3v-7z" fill="#aaa" stroke="#888"/><path d="M321 148l6 3 6-3-6-3z" fill="#ddd"/>
<rect x="342" y="142" width="18" height="21" rx="1" fill="#f1c284" stroke="#d6a766"/><circle cx="351" cy="154" r="5" fill="none" stroke="#555"/><path d="M344 160l12-13" stroke="#555"/><path d="M343 152l14 0" stroke="#c66" stroke-width=".7"/><path d="M361 151h4l-2 3z" fill="#222"/>
<rect x="369" y="143" width="42" height="19" fill="#d2d3d5" stroke="#a5a5a5"/><text x="390" y="156" class="c">完成</text>
<path d="M415.500 141v21" stroke="#777"/>
<text x="420" y="156">名称:</text>
<rect x="448.500" y="147.500" width="89" height="11" fill="#fff" stroke="#2a70b8"/>
<rect x="449" y="148" width="27" height="10" fill="#3a72c4"/>
<text x="450" y="156" style="font-size:8.8px;fill:#fff">倒圆_1</text>

<!-- ==== MODEL ==== -->
<g fill="none" stroke-linejoin="round">
<!-- lower arm -->
<path d="M549 466L492 668" stroke="#666" stroke-width="22.500"/>
<path d="M549 466L492 668" stroke="#adb1b9" stroke-width="21"/>
<path d="M543 466L486 668" stroke="#d2d5db" stroke-width="5" filter="url(#sb)"/>
<path d="M556 468L499 670" stroke="#92969e" stroke-width="6" filter="url(#sb)"/>
<path d="M551 466L493 668" stroke="#4a4e70" stroke-width=".7"/>
<!-- upper arm -->
<path d="M564 440Q568 412 583 395L664 306Q680 290 686 268L693 238" stroke="#666" stroke-width="22.500"/>
<path d="M564 440Q568 412 583 395L664 306Q680 290 686 268L693 238" stroke="#b0b5bf" stroke-width="21"/>
<path d="M558 438Q562 410 577 391L658 302Q674 286 681 266L688 236" stroke="#cdd1d8" stroke-width="4" filter="url(#sb)"/>
<path d="M570 442Q574 416 589 399L670 310Q686 294 692 270L698 240" stroke="#979ba4" stroke-width="5" filter="url(#sb)"/>
<path d="M564 440Q568 412 583 395L664 306Q680 290 686 268L693 238" stroke="#4a4e70" stroke-width=".7"/>
<path d="M574 388L592 403M657 298L672 315M673 265L697 272" stroke="#4a4e70" stroke-width=".7"/>
</g>
<!-- tip -->
<ellipse cx="693" cy="238" rx="10.500" ry="11" fill="#b4b8c1" stroke="#666" stroke-width=".8"/>
<path d="M683 238q10 5 20 1" fill="none" stroke="#4a4e70" stroke-width=".6"/>
<path d="M693 228q-4 4-2 12" fill="none" stroke="#888" stroke-width=".4"/>
<!-- R -->
<path d="M692 240L706 227L717 231" fill="none" stroke="#e8204f" stroke-width=".8"/>
<path d="M691 241l4-6 2 2z" fill="#e8204f"/>
<text transform="translate(720 237) rotate(14) scale(.8 1)" style="font-size:15px;fill:#e8204f">R 37,5</text>

<!-- center hub -->
<path d="M548 425Q532 428 529 445Q531 462 548 467L570 471L560 425z" fill="url(#hub)" stroke="#555" stroke-width=".8"/>
<ellipse cx="564" cy="450" rx="19" ry="23" transform="rotate(-8 564 450)" fill="#a9aeb8" stroke="#555" stroke-width=".9"/>
<ellipse cx="564" cy="451" rx="10.500" ry="11.500" fill="#c5c7cb" stroke="#555" stroke-width=".8"/>
<path d="M564 440a10 11 0 0 0 -6 20l-2-3q-3-10 4-15z" fill="#9a9da3"/>
<path d="M549 466L556 430M574 451l8 0M564 428l0 12" stroke="#666" stroke-width=".5"/>
<!-- axes -->
<path d="M557 449L564 417" stroke="#1414c8" stroke-width="2.500"/><path d="M561 422l4-9 2 10z" fill="#1414c8"/>
<path d="M557 449L533 441" stroke="#2a2a2a" stroke-width="1.500"/><path d="M545 445L534 442" stroke="#1f9a3a" stroke-width="3"/><path d="M557 449L541 443" stroke="#d03030" stroke-width="1"/>
<circle cx="557" cy="449" r="3" fill="#e7d23a" stroke="#444" stroke-width=".6"/>
<text x="563" y="413" style="font-size:10px;fill:#2a3ae8">Z</text>
<text x="520" y="443" style="font-size:10px;fill:#30c060">Y</text>
<text x="529" y="443" style="font-size:9px;fill:#e03030">X</text>

<!-- lower hub -->
<path d="M476 664Q459 668 458 685Q460 703 478 709L498 712L492 668z" fill="url(#hub)" stroke="#555" stroke-width=".8"/>
<ellipse cx="493" cy="690" rx="18" ry="22" transform="rotate(-8 493 690)" fill="#a9aeb8" stroke="#555" stroke-width=".9"/>
<ellipse cx="493" cy="690.500" rx="9.500" ry="10.500" fill="#c9cbcf" stroke="#555" stroke-width=".8"/>
<path d="M491 680.500a9 11 0 0 0 -6 15l3 3q-2-11 3-18z" fill="#9a9da3"/>
<path d="M490 668L485 688" stroke="#4a4e70" stroke-width=".6"/>

<!-- cursor -->
<path d="M797 320v11l2.500-2 2 4 1.500-.8-2-3.800h3.500z" fill="#f8f8f8" stroke="#333" stroke-width=".8"/>

<!-- view cube -->
<path d="M1274 651L1317 665L1302 716L1259 707z" fill="#f2f2f2" stroke="#aaa" stroke-width=".7"/>
<path d="M1247 645L1274 651L1259 707L1233 693z" fill="#fdfdfd" stroke="#aaa" stroke-width=".7"/>
<text transform="translate(1245 678) rotate(14) scale(.55 1.100)" style="font-size:10px;fill:#888;font-family:'Liberation Serif',serif">BACK</text>
<text transform="translate(1278 690) rotate(10) scale(.75 1.100)" style="font-size:11px;fill:#777;font-family:'Liberation Serif',serif">LEFT</text>
<path d="M1274 680L1280 658" stroke="#7a86e0" stroke-width="1.500"/><path d="M1278 660l3-6 1 7z" fill="#7a86e0"/>
<path d="M1274 680L1264 677" stroke="#8fb050" stroke-width="1.500"/><path d="M1264 677L1258 675" stroke="#d09070" stroke-width="1.500"/><path d="M1258 675l-3-1" stroke="#60c070" stroke-width="1.200"/>
<circle cx="1274" cy="680" r="2" fill="#e0d020" stroke="#776" stroke-width=".6"/>

<!-- status bar -->
<rect y="752" width="1365" height="17" fill="url(#st)"/>
<text x="339" y="764.500" style="font-size:8.5px;fill:#cfcfcf">单击要编辑的元素。</text>
<path d="M756.500 754v12M945.500 754v12" stroke="#bbb"/>
<rect x="963" y="754" width="100" height="13" fill="#dcdcdc"/>
<text x="966" y="764" style="font-size:8.8px;fill:#aaa">查找命令</text>
<path d="M1066 763v-3h7v-2l4 3.500-4 3.500v-2h-5v2z" fill="#dfe8f5"/>
<rect x="1083" y="756" width="10" height="10" fill="#3a78c8" stroke="#cde" stroke-width=".6"/><circle cx="1088" cy="762" r="3" fill="#dde"/>
<circle cx="1103" cy="759" r="3.500" fill="#cfe0f3" stroke="#abc"/><path d="M1106 762l3 3" stroke="#e0a040" stroke-width="1.600"/>
<rect x="1115" y="756" width="10" height="10" fill="#2f6fc0"/><rect x="1118" y="759" width="4" height="4" fill="#e8eef6"/>
<rect x="1130" y="756" width="11" height="10" fill="#5a8fd0"/><circle cx="1136" cy="762" r="3" fill="#ccc"/>
<circle cx="1151" cy="761" r="4.500" fill="none" stroke="#3fa060" stroke-width="2"/>
<path d="M1162 761l5-5 5 5-3 4h-4z" fill="#2f7ad0"/>
<rect x="1177" y="757" width="10" height="9" fill="#d8c040"/><rect x="1180" y="759" width="4" height="4" fill="#3a9c3a"/>
<rect x="1192" y="755" width="8" height="8" fill="none" stroke="#ddd"/><rect x="1196" y="759" width="8" height="8" fill="#e8a020"/>
<path d="M1206.500 754v12" stroke="#bbb"/>
<circle cx="1213" cy="761" r="4.500" fill="#dfe8f5" stroke="#2f6fc0"/><path d="M1210.500 761h5" stroke="#223" stroke-width="1.300"/>
<path d="M1220 761h82" stroke="#eee"/>
<path d="M1254 755h7v9l-3.500 2-3.500-2z" fill="#8fa8c8" stroke="#ccd"/>
<circle cx="1308" cy="761" r="4.500" fill="#dfe8f5" stroke="#2f6fc0"/><path d="M1305.500 761h5M1308 758.500v5" stroke="#223" stroke-width="1.300"/>
<path d="M1314.500 754v12M1331.500 754v12M1348.500 754v12" stroke="#bbb"/>
<rect x="1318" y="757" width="11" height="8" rx="1" fill="#e01818"/><path d="M1322.500 759.500l3 1.500-3 1.500z" fill="#fff"/>
<circle cx="1340" cy="761" r="4.500" fill="#d83a2a" stroke="#888"/>
<path d="M1357.500 755l3.500 4h-2v2h-3v-2h-2z" fill="#5ab030"/><rect x="1354" y="763" width="8" height="2" fill="#eee"/>
</svg>
</body></html>
